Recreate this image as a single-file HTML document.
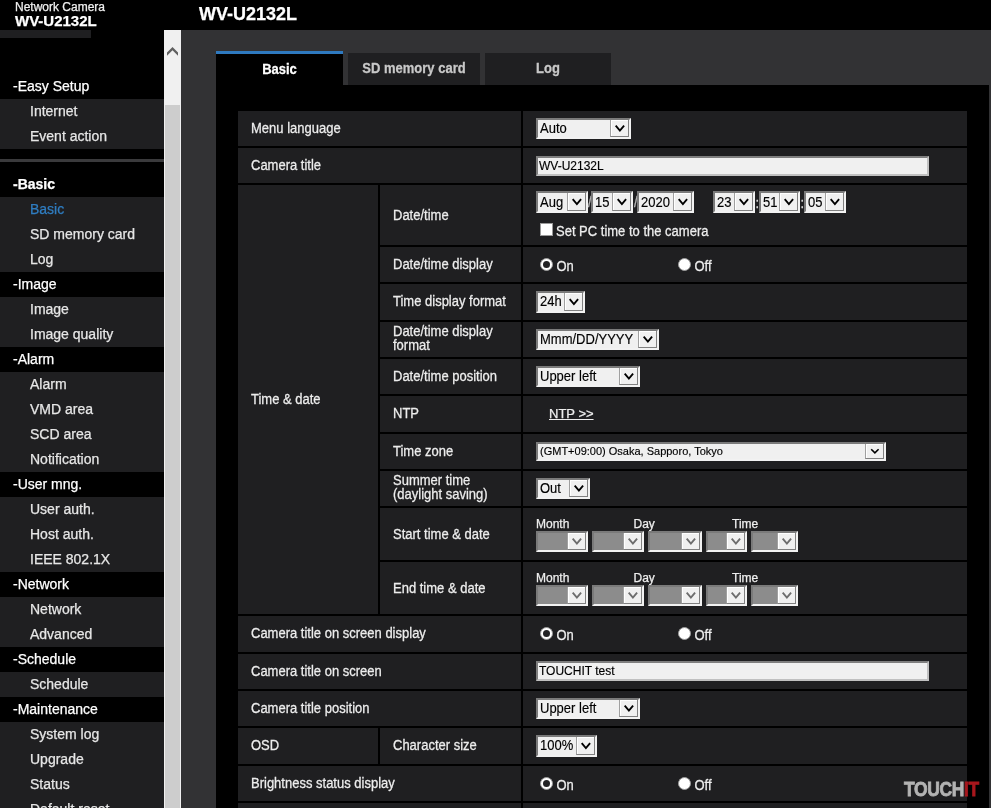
<!DOCTYPE html>
<html><head><meta charset="utf-8"><style>
html,body{margin:0;padding:0;background:#000;overflow:hidden}
body{width:991px;height:808px;position:relative;font-family:"Liberation Sans",sans-serif}
#root{position:absolute;left:0;top:0;width:991px;height:808px;will-change:transform}
#root>div,#root>svg{position:absolute}
.t{position:absolute;white-space:nowrap;line-height:normal;-webkit-text-stroke:0.25px currentColor}
.tab{text-align:center;font-size:13px;font-weight:700}
.lbl{position:absolute;display:flex;align-items:center;font-size:13px;line-height:15px;color:#ededed;-webkit-text-stroke:0.25px currentColor}
.sel,.inp{position:absolute;box-sizing:border-box;border:2px solid;border-color:#7a7a7a #f2f2f2 #f2f2f2 #7a7a7a;overflow:hidden}
.inp{background:#f0f0f0;border-color:#7f7f7f #c0c0c0 #c0c0c0 #7f7f7f}
.st{position:absolute;left:2px;top:0;font-size:13px;color:#000;white-space:nowrap;-webkit-text-stroke:0.15px #000}
.sb{position:absolute;right:0;top:0;box-sizing:border-box;background:#f0f0f0;border-left:1px solid #a0a0a0;border-right:1px solid #808080;border-bottom:1px solid #808080;box-shadow:inset 1px 1px 0 #fff}
.rad{position:absolute;width:13px;height:13px;border-radius:50%;background:#fff;box-sizing:border-box;border:1px solid #9c9c9c}
.rad .dot{position:absolute;left:2px;top:2px;width:7px;height:7px;border-radius:50%;background:#222224}
.cb{position:absolute;width:13px;height:13px;box-sizing:border-box;background:#fff;border:1px solid #999}
.sy{display:inline-block;transform:scaleY(1.1);transform-origin:0 12px}
.sy2{display:inline-block;line-height:13.3px;transform:scaleY(1.09);transform-origin:0 11px}
.logo{font-size:19.5px;font-weight:700;color:#b3b3b3;letter-spacing:-0.4px;transform:scaleX(0.895);transform-origin:0 0;-webkit-text-stroke:0.8px currentColor}
</style></head><body>
<div id="root">
<div class="t" style="left:15px;top:0.14px;font-size:12px;color:#f0f0f0;font-weight:400;">Network Camera</div>
<div class="t" style="left:15px;top:12.12px;font-size:15px;color:#ffffff;font-weight:700;">WV-U2132L</div>
<div style="left:0px;top:30px;width:91px;height:8px;background:#1f1f21;"></div>
<div class="t" style="left:199px;top:4.31px;font-size:18px;color:#ffffff;font-weight:700;">WV-U2132L</div>
<div style="left:0px;top:99px;width:164px;height:25px;background:#1f1f21;"></div>
<div style="left:0px;top:124px;width:164px;height:25px;background:#1f1f21;"></div>
<div style="left:0px;top:197px;width:164px;height:25px;background:#1f1f21;"></div>
<div style="left:0px;top:222px;width:164px;height:25px;background:#1f1f21;"></div>
<div style="left:0px;top:247px;width:164px;height:25px;background:#1f1f21;"></div>
<div style="left:0px;top:297px;width:164px;height:25px;background:#1f1f21;"></div>
<div style="left:0px;top:322px;width:164px;height:25px;background:#1f1f21;"></div>
<div style="left:0px;top:372px;width:164px;height:25px;background:#1f1f21;"></div>
<div style="left:0px;top:397px;width:164px;height:25px;background:#1f1f21;"></div>
<div style="left:0px;top:422px;width:164px;height:25px;background:#1f1f21;"></div>
<div style="left:0px;top:447px;width:164px;height:25px;background:#1f1f21;"></div>
<div style="left:0px;top:497px;width:164px;height:25px;background:#1f1f21;"></div>
<div style="left:0px;top:522px;width:164px;height:25px;background:#1f1f21;"></div>
<div style="left:0px;top:547px;width:164px;height:25px;background:#1f1f21;"></div>
<div style="left:0px;top:597px;width:164px;height:25px;background:#1f1f21;"></div>
<div style="left:0px;top:622px;width:164px;height:25px;background:#1f1f21;"></div>
<div style="left:0px;top:672px;width:164px;height:25px;background:#1f1f21;"></div>
<div style="left:0px;top:722px;width:164px;height:25px;background:#1f1f21;"></div>
<div style="left:0px;top:747px;width:164px;height:25px;background:#1f1f21;"></div>
<div style="left:0px;top:772px;width:164px;height:25px;background:#1f1f21;"></div>
<div style="left:0px;top:797px;width:164px;height:25px;background:#1f1f21;"></div>
<div style="left:0px;top:159px;width:164px;height:3px;background:#3a3a3c;"></div>
<div class="t" style="left:13px;top:77.68px;font-size:14px;color:#ffffff;font-weight:400;">-Easy Setup</div>
<div class="t" style="left:30px;top:102.68px;font-size:14px;color:#e6e6e6;font-weight:400;">Internet</div>
<div class="t" style="left:30px;top:127.68px;font-size:14px;color:#e6e6e6;font-weight:400;">Event action</div>
<div class="t" style="left:13px;top:175.68px;font-size:14px;color:#ffffff;font-weight:700;">-Basic</div>
<div class="t" style="left:30px;top:200.68px;font-size:14px;color:#2f7dc1;font-weight:400;">Basic</div>
<div class="t" style="left:30px;top:225.68px;font-size:14px;color:#e6e6e6;font-weight:400;">SD memory card</div>
<div class="t" style="left:30px;top:250.68px;font-size:14px;color:#e6e6e6;font-weight:400;">Log</div>
<div class="t" style="left:13px;top:275.68px;font-size:14px;color:#ffffff;font-weight:400;">-Image</div>
<div class="t" style="left:30px;top:300.68px;font-size:14px;color:#e6e6e6;font-weight:400;">Image</div>
<div class="t" style="left:30px;top:325.68px;font-size:14px;color:#e6e6e6;font-weight:400;">Image quality</div>
<div class="t" style="left:13px;top:350.68px;font-size:14px;color:#ffffff;font-weight:400;">-Alarm</div>
<div class="t" style="left:30px;top:375.68px;font-size:14px;color:#e6e6e6;font-weight:400;">Alarm</div>
<div class="t" style="left:30px;top:400.68px;font-size:14px;color:#e6e6e6;font-weight:400;">VMD area</div>
<div class="t" style="left:30px;top:425.68px;font-size:14px;color:#e6e6e6;font-weight:400;">SCD area</div>
<div class="t" style="left:30px;top:450.68px;font-size:14px;color:#e6e6e6;font-weight:400;">Notification</div>
<div class="t" style="left:13px;top:475.68px;font-size:14px;color:#ffffff;font-weight:400;">-User mng.</div>
<div class="t" style="left:30px;top:500.68px;font-size:14px;color:#e6e6e6;font-weight:400;">User auth.</div>
<div class="t" style="left:30px;top:525.68px;font-size:14px;color:#e6e6e6;font-weight:400;">Host auth.</div>
<div class="t" style="left:30px;top:550.68px;font-size:14px;color:#e6e6e6;font-weight:400;">IEEE 802.1X</div>
<div class="t" style="left:13px;top:575.68px;font-size:14px;color:#ffffff;font-weight:400;">-Network</div>
<div class="t" style="left:30px;top:600.68px;font-size:14px;color:#e6e6e6;font-weight:400;">Network</div>
<div class="t" style="left:30px;top:625.68px;font-size:14px;color:#e6e6e6;font-weight:400;">Advanced</div>
<div class="t" style="left:13px;top:650.68px;font-size:14px;color:#ffffff;font-weight:400;">-Schedule</div>
<div class="t" style="left:30px;top:675.68px;font-size:14px;color:#e6e6e6;font-weight:400;">Schedule</div>
<div class="t" style="left:13px;top:700.68px;font-size:14px;color:#ffffff;font-weight:400;">-Maintenance</div>
<div class="t" style="left:30px;top:725.68px;font-size:14px;color:#e6e6e6;font-weight:400;">System log</div>
<div class="t" style="left:30px;top:750.68px;font-size:14px;color:#e6e6e6;font-weight:400;">Upgrade</div>
<div class="t" style="left:30px;top:775.68px;font-size:14px;color:#e6e6e6;font-weight:400;">Status</div>
<div class="t" style="left:30px;top:800.68px;font-size:14px;color:#e6e6e6;font-weight:400;">Default reset</div>
<div style="left:164px;top:30px;width:17px;height:778px;background:#f0f0f0;"></div>
<div style="left:165px;top:105px;width:15px;height:703px;background:#cdcdcd;"></div>
<svg style="position:absolute;left:164px;top:30px" width="17" height="40"><path d="M3 22.5 L8.5 17 L14 22.5 L14 25.8 L8.5 20.3 L3 25.8 Z" fill="#606060"/></svg>
<div style="left:181px;top:30px;width:810px;height:778px;background:#323234;"></div>
<div style="left:216px;top:85px;width:773px;height:723px;background:#000;"></div>
<div style="left:216px;top:51px;width:127px;height:3px;background:#2e79bf;"></div>
<div style="left:216px;top:54px;width:127px;height:31px;background:#000;"></div>
<div style="left:348px;top:53px;width:132px;height:32px;background:#1f1f21;"></div>
<div style="left:485px;top:53px;width:126px;height:32px;background:#1f1f21;"></div>
<div class="t tab" style="left:216px;width:127px;top:62.03px;color:#fff"><span class="sy">Basic</span></div>
<div class="t tab" style="left:348px;width:132px;top:61.44px;color:#c8c8c8"><span class="sy">SD memory card</span></div>
<div class="t tab" style="left:485px;width:126px;top:61.44px;color:#c8c8c8"><span class="sy">Log</span></div>
<div style="left:238px;top:111px;width:283px;height:35px;background:#1f1f21;"></div>
<div class="lbl" style="left:251px;top:111px;height:35px"><span class="sy">Menu language</span></div>
<div style="left:523px;top:111px;width:444px;height:35px;background:#1f1f21;"></div>
<div style="left:238px;top:148px;width:283px;height:35px;background:#1f1f21;"></div>
<div class="lbl" style="left:251px;top:148px;height:35px"><span class="sy">Camera title</span></div>
<div style="left:523px;top:148px;width:444px;height:35px;background:#1f1f21;"></div>
<div style="left:380px;top:185px;width:141px;height:60px;background:#1f1f21;"></div>
<div class="lbl" style="left:393px;top:185px;height:60px"><span class="sy">Date/time</span></div>
<div style="left:523px;top:185px;width:444px;height:60px;background:#1f1f21;"></div>
<div style="left:380px;top:247px;width:141px;height:35px;background:#1f1f21;"></div>
<div class="lbl" style="left:393px;top:247px;height:35px"><span class="sy">Date/time display</span></div>
<div style="left:523px;top:247px;width:444px;height:35px;background:#1f1f21;"></div>
<div style="left:380px;top:284px;width:141px;height:36px;background:#1f1f21;"></div>
<div class="lbl" style="left:393px;top:283.5px;height:36px"><span class="sy">Time display format</span></div>
<div style="left:523px;top:284px;width:444px;height:36px;background:#1f1f21;"></div>
<div style="left:380px;top:322px;width:141px;height:35px;background:#1f1f21;"></div>
<div class="lbl" style="left:393px;top:321px;height:35px"><span class="sy2">Date/time display<br>format</span></div>
<div style="left:523px;top:322px;width:444px;height:35px;background:#1f1f21;"></div>
<div style="left:380px;top:359px;width:141px;height:35px;background:#1f1f21;"></div>
<div class="lbl" style="left:393px;top:359px;height:35px"><span class="sy">Date/time position</span></div>
<div style="left:523px;top:359px;width:444px;height:35px;background:#1f1f21;"></div>
<div style="left:380px;top:396px;width:141px;height:36px;background:#1f1f21;"></div>
<div class="lbl" style="left:393px;top:395.5px;height:36px"><span class="sy">NTP</span></div>
<div style="left:523px;top:396px;width:444px;height:36px;background:#1f1f21;"></div>
<div style="left:380px;top:434px;width:141px;height:35px;background:#1f1f21;"></div>
<div class="lbl" style="left:393px;top:434px;height:35px"><span class="sy">Time zone</span></div>
<div style="left:523px;top:434px;width:444px;height:35px;background:#1f1f21;"></div>
<div style="left:380px;top:471px;width:141px;height:35px;background:#1f1f21;"></div>
<div class="lbl" style="left:393px;top:470px;height:35px"><span class="sy2">Summer time<br>(daylight saving)</span></div>
<div style="left:523px;top:471px;width:444px;height:35px;background:#1f1f21;"></div>
<div style="left:380px;top:508px;width:141px;height:52px;background:#1f1f21;"></div>
<div class="lbl" style="left:393px;top:508px;height:52px"><span class="sy">Start time &amp; date</span></div>
<div style="left:523px;top:508px;width:444px;height:52px;background:#1f1f21;"></div>
<div style="left:380px;top:562px;width:141px;height:52px;background:#1f1f21;"></div>
<div class="lbl" style="left:393px;top:562px;height:52px"><span class="sy">End time &amp; date</span></div>
<div style="left:523px;top:562px;width:444px;height:52px;background:#1f1f21;"></div>
<div style="left:238px;top:616px;width:283px;height:36px;background:#1f1f21;"></div>
<div class="lbl" style="left:251px;top:615.5px;height:36px"><span class="sy">Camera title on screen display</span></div>
<div style="left:523px;top:616px;width:444px;height:36px;background:#1f1f21;"></div>
<div style="left:238px;top:654px;width:283px;height:35px;background:#1f1f21;"></div>
<div class="lbl" style="left:251px;top:654px;height:35px"><span class="sy">Camera title on screen</span></div>
<div style="left:523px;top:654px;width:444px;height:35px;background:#1f1f21;"></div>
<div style="left:238px;top:691px;width:283px;height:35px;background:#1f1f21;"></div>
<div class="lbl" style="left:251px;top:691px;height:35px"><span class="sy">Camera title position</span></div>
<div style="left:523px;top:691px;width:444px;height:35px;background:#1f1f21;"></div>
<div style="left:238px;top:728px;width:140px;height:36px;background:#1f1f21;"></div>
<div style="left:380px;top:728px;width:141px;height:36px;background:#1f1f21;"></div>
<div class="lbl" style="left:251px;top:727.5px;height:36px"><span class="sy">OSD</span></div>
<div class="lbl" style="left:393px;top:727.5px;height:36px"><span class="sy">Character size</span></div>
<div style="left:523px;top:728px;width:444px;height:36px;background:#1f1f21;"></div>
<div style="left:238px;top:766px;width:283px;height:35px;background:#1f1f21;"></div>
<div class="lbl" style="left:251px;top:766px;height:35px"><span class="sy">Brightness status display</span></div>
<div style="left:523px;top:766px;width:444px;height:35px;background:#1f1f21;"></div>
<div style="left:238px;top:803px;width:283px;height:37px;background:#1f1f21;"></div>
<div style="left:523px;top:803px;width:444px;height:37px;background:#1f1f21;"></div>
<div style="left:238px;top:185px;width:140px;height:429px;background:#1f1f21;"></div>
<div class="lbl" style="left:251px;top:185px;height:429px"><span class="sy">Time &amp; date</span></div>
<div class="sel" style="left:536px;top:118px;width:95px;height:21px;background:#f0f0f0"><div class="st" style="top:0px;font-size:13px;line-height:17px"><span class=sy>Auto</span></div><div class="sb" style="width:19px;height:17px"></div><svg width="95" height="21" style="position:absolute;left:-2px;top:-2px"><path d="M79.70 7.65 L83.90 12.55 L88.10 7.65" fill="none" stroke="#000" stroke-width="1.85"/></svg></div>
<div class="inp" style="left:536px;top:156px;width:393px;height:20px"><div class="st" style="left:1px;font-size:12px;line-height:16px">WV-U2132L</div></div>
<div class="sel" style="left:536px;top:191px;width:52px;height:22px;background:#f0f0f0"><div class="st" style="top:1px;font-size:13px;line-height:18px"><span class=sy>Aug</span></div><div class="sb" style="width:19px;height:18px"></div><svg width="52" height="22" style="position:absolute;left:-2px;top:-2px"><path d="M36.70 8.15 L40.90 13.05 L45.10 8.15" fill="none" stroke="#000" stroke-width="1.85"/></svg></div>
<div class="t" style="left:588px;top:195.24px;font-size:13px;color:#bbbbbb;font-weight:400;"><span class="sy">/</span></div>
<div class="sel" style="left:591px;top:191px;width:42px;height:22px;background:#f0f0f0"><div class="st" style="top:1px;font-size:13px;line-height:18px"><span class=sy>15</span></div><div class="sb" style="width:19px;height:18px"></div><svg width="42" height="22" style="position:absolute;left:-2px;top:-2px"><path d="M26.70 8.15 L30.90 13.05 L35.10 8.15" fill="none" stroke="#000" stroke-width="1.85"/></svg></div>
<div class="t" style="left:634px;top:195.24px;font-size:13px;color:#bbbbbb;font-weight:400;"><span class="sy">/</span></div>
<div class="sel" style="left:637px;top:191px;width:57px;height:22px;background:#f0f0f0"><div class="st" style="top:1px;font-size:13px;line-height:18px"><span class=sy>2020</span></div><div class="sb" style="width:19px;height:18px"></div><svg width="57" height="22" style="position:absolute;left:-2px;top:-2px"><path d="M41.70 8.15 L45.90 13.05 L50.10 8.15" fill="none" stroke="#000" stroke-width="1.85"/></svg></div>
<div class="sel" style="left:713px;top:191px;width:42px;height:22px;background:#f0f0f0"><div class="st" style="top:1px;font-size:13px;line-height:18px"><span class=sy>23</span></div><div class="sb" style="width:19px;height:18px"></div><svg width="42" height="22" style="position:absolute;left:-2px;top:-2px"><path d="M26.70 8.15 L30.90 13.05 L35.10 8.15" fill="none" stroke="#000" stroke-width="1.85"/></svg></div>
<div class="t" style="left:755.5px;top:196.24px;font-size:13px;color:#dddddd;font-weight:400;"><span class="sy">:</span></div>
<div class="sel" style="left:759px;top:191px;width:41px;height:22px;background:#f0f0f0"><div class="st" style="top:1px;font-size:13px;line-height:18px"><span class=sy>51</span></div><div class="sb" style="width:19px;height:18px"></div><svg width="41" height="22" style="position:absolute;left:-2px;top:-2px"><path d="M25.70 8.15 L29.90 13.05 L34.10 8.15" fill="none" stroke="#000" stroke-width="1.85"/></svg></div>
<div class="t" style="left:800.5px;top:196.24px;font-size:13px;color:#dddddd;font-weight:400;"><span class="sy">:</span></div>
<div class="sel" style="left:804px;top:191px;width:42px;height:22px;background:#f0f0f0"><div class="st" style="top:1px;font-size:13px;line-height:18px"><span class=sy>05</span></div><div class="sb" style="width:19px;height:18px"></div><svg width="42" height="22" style="position:absolute;left:-2px;top:-2px"><path d="M26.70 8.15 L30.90 13.05 L35.10 8.15" fill="none" stroke="#000" stroke-width="1.85"/></svg></div>
<div class="cb" style="left:540px;top:223px"></div>
<div class="t" style="left:556px;top:223.83px;font-size:13px;color:#eeeeee;font-weight:400;"><span class="sy">Set PC time to the camera</span></div>
<div class="rad" style="left:540px;top:258px"><div class="dot"></div></div>
<div class="t" style="left:556.5px;top:259.24px;font-size:13px;color:#eeeeee;font-weight:400;"><span class="sy">On</span></div>
<div class="rad" style="left:678px;top:258px"></div>
<div class="t" style="left:694.5px;top:259.24px;font-size:13px;color:#eeeeee;font-weight:400;"><span class="sy">Off</span></div>
<div class="sel" style="left:536px;top:291px;width:49px;height:22px;background:#f0f0f0"><div class="st" style="top:0px;font-size:13px;line-height:18px"><span class=sy>24h</span></div><div class="sb" style="width:19px;height:18px"></div><svg width="49" height="22" style="position:absolute;left:-2px;top:-2px"><path d="M33.70 8.15 L37.90 13.05 L42.10 8.15" fill="none" stroke="#000" stroke-width="1.85"/></svg></div>
<div class="sel" style="left:536px;top:329px;width:123px;height:21px;background:#f0f0f0"><div class="st" style="top:0px;font-size:13px;line-height:17px"><span class=sy>Mmm/DD/YYYY</span></div><div class="sb" style="width:19px;height:17px"></div><svg width="123" height="21" style="position:absolute;left:-2px;top:-2px"><path d="M107.70 7.65 L111.90 12.55 L116.10 7.65" fill="none" stroke="#000" stroke-width="1.85"/></svg></div>
<div class="sel" style="left:536px;top:366px;width:104px;height:21px;background:#f0f0f0"><div class="st" style="top:0px;font-size:13px;line-height:17px"><span class=sy>Upper left</span></div><div class="sb" style="width:19px;height:17px"></div><svg width="104" height="21" style="position:absolute;left:-2px;top:-2px"><path d="M88.70 7.65 L92.90 12.55 L97.10 7.65" fill="none" stroke="#000" stroke-width="1.85"/></svg></div>
<div class="t" style="left:549px;top:406.24px;font-size:13px;color:#eeeeee;text-decoration:underline">NTP &gt;&gt;</div>
<div class="sel" style="left:536px;top:442px;width:350px;height:19px;background:#f0f0f0"><div class="st" style="top:0px;font-size:11px;line-height:15px">(GMT+09:00) Osaka, Sapporo, Tokyo</div><div class="sb" style="width:19px;height:15px"></div><svg width="350" height="19" style="position:absolute;left:-2px;top:-2px"><path d="M335.20 7.30 L338.90 10.90 L342.60 7.30" fill="none" stroke="#000" stroke-width="1.6"/></svg></div>
<div class="sel" style="left:536px;top:478px;width:54px;height:21px;background:#f0f0f0"><div class="st" style="top:0px;font-size:13px;line-height:17px"><span class=sy>Out</span></div><div class="sb" style="width:19px;height:17px"></div><svg width="54" height="21" style="position:absolute;left:-2px;top:-2px"><path d="M38.70 7.65 L42.90 12.55 L47.10 7.65" fill="none" stroke="#000" stroke-width="1.85"/></svg></div>
<div class="t" style="left:536px;top:516.64px;font-size:12px;color:#eeeeee;font-weight:400;">Month</div>
<div class="t" style="left:633.5px;top:516.64px;font-size:12px;color:#eeeeee;font-weight:400;">Day</div>
<div class="t" style="left:732px;top:516.64px;font-size:12px;color:#eeeeee;font-weight:400;">Time</div>
<div class="sel" style="left:536px;top:531px;width:52px;height:21px;background:#8c8c8c"><div class="st" style="top:0px;font-size:13px;line-height:17px"></div><div class="sb" style="width:19px;height:17px"></div><svg width="52" height="21" style="position:absolute;left:-2px;top:-2px"><path d="M36.70 7.65 L40.90 12.55 L45.10 7.65" fill="none" stroke="#6d6d6d" stroke-width="1.85"/></svg></div>
<div class="sel" style="left:592px;top:531px;width:52px;height:21px;background:#8c8c8c"><div class="st" style="top:0px;font-size:13px;line-height:17px"></div><div class="sb" style="width:19px;height:17px"></div><svg width="52" height="21" style="position:absolute;left:-2px;top:-2px"><path d="M36.70 7.65 L40.90 12.55 L45.10 7.65" fill="none" stroke="#6d6d6d" stroke-width="1.85"/></svg></div>
<div class="sel" style="left:648px;top:531px;width:54px;height:21px;background:#8c8c8c"><div class="st" style="top:0px;font-size:13px;line-height:17px"></div><div class="sb" style="width:19px;height:17px"></div><svg width="54" height="21" style="position:absolute;left:-2px;top:-2px"><path d="M38.70 7.65 L42.90 12.55 L47.10 7.65" fill="none" stroke="#6d6d6d" stroke-width="1.85"/></svg></div>
<div class="sel" style="left:706px;top:531px;width:41px;height:21px;background:#8c8c8c"><div class="st" style="top:0px;font-size:13px;line-height:17px"></div><div class="sb" style="width:19px;height:17px"></div><svg width="41" height="21" style="position:absolute;left:-2px;top:-2px"><path d="M25.70 7.65 L29.90 12.55 L34.10 7.65" fill="none" stroke="#6d6d6d" stroke-width="1.85"/></svg></div>
<div class="sel" style="left:751px;top:531px;width:47px;height:21px;background:#8c8c8c"><div class="st" style="top:0px;font-size:13px;line-height:17px"></div><div class="sb" style="width:19px;height:17px"></div><svg width="47" height="21" style="position:absolute;left:-2px;top:-2px"><path d="M31.70 7.65 L35.90 12.55 L40.10 7.65" fill="none" stroke="#6d6d6d" stroke-width="1.85"/></svg></div>
<div class="t" style="left:536px;top:570.64px;font-size:12px;color:#eeeeee;font-weight:400;">Month</div>
<div class="t" style="left:633.5px;top:570.64px;font-size:12px;color:#eeeeee;font-weight:400;">Day</div>
<div class="t" style="left:732px;top:570.64px;font-size:12px;color:#eeeeee;font-weight:400;">Time</div>
<div class="sel" style="left:536px;top:585px;width:52px;height:21px;background:#8c8c8c"><div class="st" style="top:0px;font-size:13px;line-height:17px"></div><div class="sb" style="width:19px;height:17px"></div><svg width="52" height="21" style="position:absolute;left:-2px;top:-2px"><path d="M36.70 7.65 L40.90 12.55 L45.10 7.65" fill="none" stroke="#6d6d6d" stroke-width="1.85"/></svg></div>
<div class="sel" style="left:592px;top:585px;width:52px;height:21px;background:#8c8c8c"><div class="st" style="top:0px;font-size:13px;line-height:17px"></div><div class="sb" style="width:19px;height:17px"></div><svg width="52" height="21" style="position:absolute;left:-2px;top:-2px"><path d="M36.70 7.65 L40.90 12.55 L45.10 7.65" fill="none" stroke="#6d6d6d" stroke-width="1.85"/></svg></div>
<div class="sel" style="left:648px;top:585px;width:54px;height:21px;background:#8c8c8c"><div class="st" style="top:0px;font-size:13px;line-height:17px"></div><div class="sb" style="width:19px;height:17px"></div><svg width="54" height="21" style="position:absolute;left:-2px;top:-2px"><path d="M38.70 7.65 L42.90 12.55 L47.10 7.65" fill="none" stroke="#6d6d6d" stroke-width="1.85"/></svg></div>
<div class="sel" style="left:706px;top:585px;width:41px;height:21px;background:#8c8c8c"><div class="st" style="top:0px;font-size:13px;line-height:17px"></div><div class="sb" style="width:19px;height:17px"></div><svg width="41" height="21" style="position:absolute;left:-2px;top:-2px"><path d="M25.70 7.65 L29.90 12.55 L34.10 7.65" fill="none" stroke="#6d6d6d" stroke-width="1.85"/></svg></div>
<div class="sel" style="left:751px;top:585px;width:47px;height:21px;background:#8c8c8c"><div class="st" style="top:0px;font-size:13px;line-height:17px"></div><div class="sb" style="width:19px;height:17px"></div><svg width="47" height="21" style="position:absolute;left:-2px;top:-2px"><path d="M31.70 7.65 L35.90 12.55 L40.10 7.65" fill="none" stroke="#6d6d6d" stroke-width="1.85"/></svg></div>
<div class="rad" style="left:540px;top:627px"><div class="dot"></div></div>
<div class="t" style="left:556.5px;top:628.24px;font-size:13px;color:#eeeeee;font-weight:400;"><span class="sy">On</span></div>
<div class="rad" style="left:678px;top:627px"></div>
<div class="t" style="left:694.5px;top:628.24px;font-size:13px;color:#eeeeee;font-weight:400;"><span class="sy">Off</span></div>
<div class="inp" style="left:536px;top:661px;width:393px;height:20px"><div class="st" style="left:1px;font-size:12px;line-height:16px">TOUCHIT test</div></div>
<div class="sel" style="left:536px;top:698px;width:104px;height:21px;background:#f0f0f0"><div class="st" style="top:0px;font-size:13px;line-height:17px"><span class=sy>Upper left</span></div><div class="sb" style="width:19px;height:17px"></div><svg width="104" height="21" style="position:absolute;left:-2px;top:-2px"><path d="M88.70 7.65 L92.90 12.55 L97.10 7.65" fill="none" stroke="#000" stroke-width="1.85"/></svg></div>
<div class="sel" style="left:536px;top:735px;width:61px;height:22px;background:#f0f0f0"><div class="st" style="top:0px;font-size:13px;line-height:18px"><span class=sy>100%</span></div><div class="sb" style="width:19px;height:18px"></div><svg width="61" height="22" style="position:absolute;left:-2px;top:-2px"><path d="M45.70 8.15 L49.90 13.05 L54.10 8.15" fill="none" stroke="#000" stroke-width="1.85"/></svg></div>
<div class="rad" style="left:540px;top:777px"><div class="dot"></div></div>
<div class="t" style="left:556.5px;top:778.24px;font-size:13px;color:#eeeeee;font-weight:400;"><span class="sy">On</span></div>
<div class="rad" style="left:678px;top:777px"></div>
<div class="t" style="left:694.5px;top:778.24px;font-size:13px;color:#eeeeee;font-weight:400;"><span class="sy">Off</span></div>
<div class="t logo" style="left:904px;top:778.35px">TOUCH<span style="color:#a8171d">IT</span></div>
</div>
</body></html>
